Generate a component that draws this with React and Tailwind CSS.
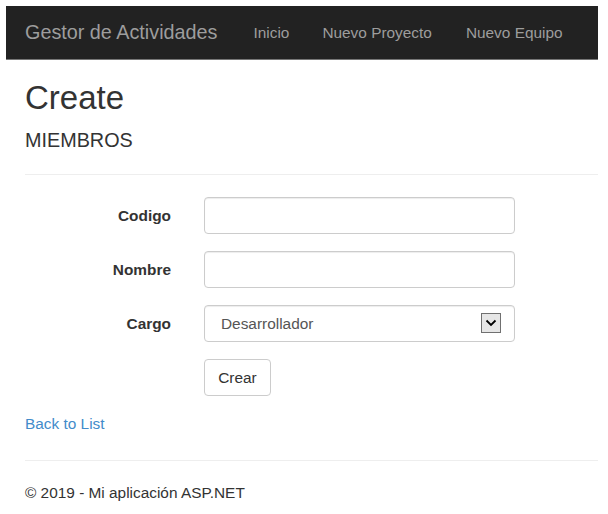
import React from "react";

export default function App() {
  return (
    <div className="min-h-[514px] w-[608px] bg-white pt-[6px] font-['Liberation_Sans',Arial,sans-serif] text-[#333]">
      {/* Navbar */}
      <div className="ml-[6px] flex h-[54px] w-[592px] items-center border-b border-[#777] bg-[#222] text-[#9d9d9d]">
        <span className="ml-[19px] text-[19.8px] leading-none">Gestor de Actividades</span>
        <span className="ml-[36px] text-[15.4px] leading-none">Inicio</span>
        <span className="ml-[33px] text-[15.4px] leading-none">Nuevo Proyecto</span>
        <span className="ml-[34px] text-[15.4px] leading-none">Nuevo Equipo</span>
      </div>

      {/* Content */}
      <div className="w-[598px] pl-[25px]">
        <h2 className="mt-[20.4px] text-[33px] leading-[1.1] font-normal">Create</h2>
        <h4 className="mt-[13.8px] text-[19.8px] leading-[1.1] font-normal">MIEMBROS</h4>
        <div className="mt-[21.7px] h-px bg-[#eee]" />

        <div className="mt-[22px] flex flex-col gap-[17px]">
          <div className="flex items-center">
            <label className="w-[146px] text-right text-[15.4px] font-bold">Codigo</label>
            <div className="ml-[33px] h-[37px] w-[311px] rounded-[4px] border border-[#ccc] bg-white shadow-[inset_0_1px_1px_rgba(0,0,0,0.075)]" />
          </div>
          <div className="flex items-center">
            <label className="w-[146px] text-right text-[15.4px] font-bold">Nombre</label>
            <div className="ml-[33px] h-[37px] w-[311px] rounded-[4px] border border-[#ccc] bg-white shadow-[inset_0_1px_1px_rgba(0,0,0,0.075)]" />
          </div>
          <div className="flex items-center">
            <label className="w-[146px] text-right text-[15.4px] font-bold">Cargo</label>
            <div className="ml-[33px] flex h-[37px] w-[311px] items-center rounded-[4px] border border-[#ccc] bg-white pl-[16px] pr-[13px] text-[15.4px] text-[#555] shadow-[inset_0_1px_1px_rgba(0,0,0,0.075)]">
              <span className="flex-1">Desarrollador</span>
              <span className="flex h-[20px] w-[20px] items-center justify-center border border-[#707070] bg-[#e6e6e6]">
                <svg width="12" height="8" viewBox="0 0 12 8">
                  <path d="M1.5 1.5 L6 6 L10.5 1.5" fill="none" stroke="#000" strokeWidth="1.8" />
                </svg>
              </span>
            </div>
          </div>
          <div className="flex items-center">
            <div className="w-[146px]" />
            <div className="ml-[33px] flex h-[37px] w-[67px] items-center justify-center rounded-[4px] border border-[#ccc] bg-white text-[15.4px] text-[#333]">
              Crear
            </div>
          </div>
        </div>

        <div className="mt-[17.5px] text-[15.4px] leading-[22px] text-[#428bca]">Back to List</div>

        <div className="mt-[24.5px] h-px bg-[#eee]" />
        <div className="mt-[21px] text-[15.4px] leading-[22px] text-[#333]">© 2019 - Mi aplicación ASP.NET</div>
      </div>
    </div>
  );
}
